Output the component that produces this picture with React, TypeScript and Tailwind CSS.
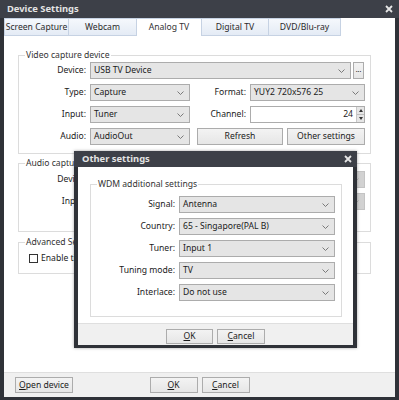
import React from "react";

const Chevron: React.FC<{ color?: string }> = ({ color = "#6d6d6d" }) => (
  <svg width="7" height="4" viewBox="0 0 7 4" className="shrink-0">
    <path d="M0.5 0.5 L3.5 3.5 L6.5 0.5" fill="none" stroke={color} strokeWidth="0.9" />
  </svg>
);

interface SelectProps {
  value?: string;
  className?: string;
  disabled?: boolean;
}

const Select: React.FC<SelectProps> = ({ value = "", className = "", disabled }) => (
  <div
    className={`h-[17px] flex items-center justify-between pl-[3px] pr-[5px] border ${
      disabled ? "bg-[#d2d2d2] border-[#c4c4c4]" : "bg-[#e5e5e5] border-[#acacac]"
    } ${className}`}
  >
    <span className="whitespace-nowrap">{value}</span>
    <Chevron color={disabled ? "#a8a8a8" : "#6d6d6d"} />
  </div>
);

const Btn: React.FC<{ className?: string; children: React.ReactNode }> = ({ className = "", children }) => (
  <div
    className={`flex items-center justify-center border border-[#acacac] bg-linear-to-b from-[#f3f3f3] to-[#e6e6e6] whitespace-nowrap ${className}`}
  >
    {children}
  </div>
);

const Row: React.FC<{ label: string; labelW: string; children: React.ReactNode }> = ({ label, labelW, children }) => (
  <div className="h-[17px] flex items-center">
    <span className={`${labelW} text-right pr-[4px] whitespace-nowrap`}>{label}</span>
    {children}
  </div>
);

const tabs = [
  { name: "Screen Capture", w: "w-[65px]" },
  { name: "Webcam", w: "w-[68px]" },
  { name: "Analog TV", w: "w-[65px]", active: true },
  { name: "Digital TV", w: "w-[67px]" },
  { name: "DVD/Blu-ray", w: "w-[72px]" },
];

const Spin: React.FC = () => (
  <div className="w-[115px] h-[17px] border border-[#acacac] bg-white flex items-center justify-end">
    <span className="pr-[3px]">24</span>
    <div className="w-[8px] h-full flex flex-col border-l border-[#c8c8c8]">
      <div className="flex-1 bg-[#e6e6e6] border-b border-[#bdbdbd] flex items-center justify-center">
        <svg width="4" height="3" viewBox="0 0 4 3">
          <path d="M0 3 L2 0 L4 3 Z" fill="#333" />
        </svg>
      </div>
      <div className="flex-1 bg-[#e6e6e6] flex items-center justify-center">
        <svg width="4" height="3" viewBox="0 0 4 3">
          <path d="M0 0 L2 3 L4 0 Z" fill="#333" />
        </svg>
      </div>
    </div>
  </div>
);

const CloseX: React.FC = () => (
  <svg width="8" height="8" viewBox="0 0 8 8">
    <path d="M1 1 L7 7 M7 1 L1 7" stroke="#e6e6e6" strokeWidth="1.8" />
  </svg>
);

export default function App() {
  return (
    <div className="w-[399px] h-[400px] bg-[#2f3238] flex flex-col relative font-['Noto_Sans',sans-serif] text-[8.6px] leading-none text-[#1a1a1a]">
      {/* title bar */}
      <div className="h-[18px] flex items-center justify-between pl-[7px] pr-[6px] bg-[#3d4048] text-[#e4e4e4] font-bold text-[9.4px]">
        <span>Device Settings</span>
        <CloseX />
      </div>

      <div className="flex-1 mx-[4px] mb-[3px] bg-white flex flex-col">
        {/* tabs */}
        <div className="h-[18px] flex">
          {tabs.map((t) => (
            <div
              key={t.name}
              className={`${t.w} h-full flex items-center justify-center whitespace-nowrap border-r border-t border-[#c6d2e3] first:border-l ${
                t.active
                  ? "bg-white text-[#333] border-b-0"
                  : "bg-linear-to-b from-[#f5f8fc] to-[#e4ebf5] border-b text-[#2a2a2a]"
              }`}
            >
              {t.name}
            </div>
          ))}
          <div className="flex-1" />
        </div>

        {/* tab page */}
        <div className="flex-1 flex flex-col pl-[14px] pt-[13px]">
          <fieldset className="w-[353px] border border-[#dcdcdc] pt-[1px] pb-[8px] flex flex-col gap-[5px]">
            <legend className="ml-[6px] px-[1px] leading-[12px] text-[#333]">Video capture device</legend>
            <Row label="Device:" labelW="w-[71px]">
              <Select value="USB TV Device" className="w-[261px]" />
              <Btn className="w-[11px] h-[17px] ml-[2px] text-[7px] pb-[3px]">...</Btn>
            </Row>
            <Row label="Type:" labelW="w-[71px]">
              <Select value="Capture" className="w-[100px]" />
              <span className="w-[60px] text-right pr-[4px]">Format:</span>
              <Select value="YUY2 720x576 25" className="w-[115px]" />
            </Row>
            <Row label="Input:" labelW="w-[71px]">
              <Select value="Tuner" className="w-[100px]" />
              <span className="w-[60px] text-right pr-[4px]">Channel:</span>
              <Spin />
            </Row>
            <Row label="Audio:" labelW="w-[71px]">
              <Select value="AudioOut" className="w-[100px]" />
              <Btn className="w-[86px] h-[17px] ml-[7px]">Refresh</Btn>
              <Btn className="w-[78px] h-[17px] ml-[4px]">Other settings</Btn>
            </Row>
          </fieldset>

          <fieldset className="mt-[3px] w-[353px] border border-[#dcdcdc] pt-[2px] pb-[21px] flex flex-col gap-[5px]">
            <legend className="ml-[6px] px-[1px] leading-[12px] text-[#333]">Audio capture device</legend>
            <Row label="Device:" labelW="w-[71px]">
              <Select className="w-[275px]" disabled />
            </Row>
            <Row label="Input:" labelW="w-[71px]">
              <Select className="w-[275px]" disabled />
            </Row>
          </fieldset>

          <fieldset className="mt-[4px] w-[353px] border border-[#dcdcdc] pt-[4px] pb-[8px] pl-[10px]">
            <legend className="ml-[-4px] px-[1px] leading-[12px] text-[#333]">Advanced Settings</legend>
            <div className="h-[13px] flex items-center gap-[3px]">
              <div className="w-[9px] h-[9px] border border-[#333] bg-white" />
              <span>Enable timeshift recording</span>
            </div>
          </fieldset>
        </div>

        {/* footer */}
        <div className="h-[25px] bg-[#f0f0f0] border-t border-[#dfdfdf] grid grid-cols-[1fr_auto_1fr] items-center">
          <div className="pl-[11px]">
            <Btn className="w-[58px] h-[16px]">
              <span>
                <span className="underline">O</span>pen device
              </span>
            </Btn>
          </div>
          <div className="flex gap-[4px]">
            <Btn className="w-[48px] h-[16px]">
              <span>
                <span className="underline">O</span>K
              </span>
            </Btn>
            <Btn className="w-[48px] h-[16px]">
              <span>
                <span className="underline">C</span>ancel
              </span>
            </Btn>
          </div>
          <div />
        </div>
      </div>

      {/* Other settings dialog */}
      <div className="absolute left-[74px] top-[151px] w-[283px] h-[197px] bg-[#2f3238] flex flex-col shadow-[0_0_3px_rgba(0,0,0,0.35)]">
        <div className="h-[16px] flex items-center justify-between pl-[8px] pr-[5px] bg-[#3d4048] text-[#e4e4e4] font-bold text-[9.4px]">
          <span>Other settings</span>
          <CloseX />
        </div>
        <div className="flex-1 mx-[4px] mb-[3px] bg-white flex flex-col">
          <div className="flex-1 pl-[12px] pt-[11px]">
            <fieldset className="w-[252px] border border-[#dcdcdc] pt-[6px] pb-[15px] flex flex-col gap-[5px]">
              <legend className="ml-[6px] px-[1px] leading-[12px] text-[#333]">WDM additional settings</legend>
              <Row label="Signal:" labelW="w-[88px]">
                <Select value="Antenna" className="w-[156px]" />
              </Row>
              <Row label="Country:" labelW="w-[88px]">
                <Select value="65 - Singapore(PAL B)" className="w-[156px]" />
              </Row>
              <Row label="Tuner:" labelW="w-[88px]">
                <Select value="Input 1" className="w-[156px]" />
              </Row>
              <Row label="Tuning mode:" labelW="w-[88px]">
                <Select value="TV" className="w-[156px]" />
              </Row>
              <Row label="Interlace:" labelW="w-[88px]">
                <Select value="Do not use" className="w-[156px]" />
              </Row>
            </fieldset>
          </div>
          <div className="h-[22px] bg-[#f0f0f0] border-t border-[#dfdfdf] flex justify-center items-start pt-[5px] gap-[4px]">
            <Btn className="w-[47px] h-[15px]">
              <span>
                <span className="underline">O</span>K
              </span>
            </Btn>
            <Btn className="w-[48px] h-[15px]">
              <span>
                <span className="underline">C</span>ancel
              </span>
            </Btn>
          </div>
        </div>
      </div>
    </div>
  );
}
